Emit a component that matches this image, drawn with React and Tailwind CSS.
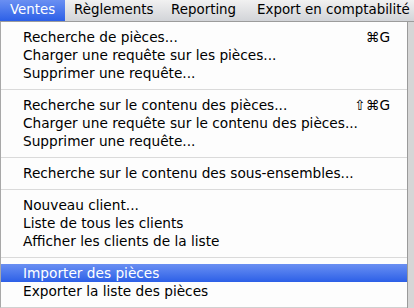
const FONT = { fontFamily: '"DejaVu Sans", "Liberation Sans", sans-serif' }

const groups = [
  [
    { label: 'Recherche de pièces...', keys: '⌘G' },
    { label: 'Charger une requête sur les pièces...' },
    { label: 'Supprimer une requête...' },
  ],
  [
    { label: 'Recherche sur le contenu des pièces...', keys: '⇧⌘G' },
    { label: 'Charger une requête sur le contenu des pièces...' },
    { label: 'Supprimer une requête...' },
  ],
  [{ label: 'Recherche sur le contenu des sous-ensembles...' }],
  [
    { label: 'Nouveau client...' },
    { label: 'Liste de tous les clients' },
    { label: 'Afficher les clients de la liste' },
  ],
  [
    { label: 'Importer des pièces', active: true },
    { label: 'Exporter la liste des pièces' },
  ],
]

function Item({ label, keys, active }) {
  return (
    <div className={`h-[18px] flex items-center pl-[22px] pr-[17px] ${active ? 'bg-gradient-to-b from-[#6a8ff2] to-[#2c5fe7] text-white' : 'text-black'}`}>
      <span className="flex-1 whitespace-nowrap">{label}</span>
      {keys && <span className="whitespace-nowrap">{keys}</span>}
    </div>
  )
}

export default function App() {
  return (
    <div className="w-[414px] h-[308px] overflow-hidden bg-white flex flex-col" style={FONT}>
      <div className="h-[22px] shrink-0 flex items-center text-[13.4px] bg-gradient-to-b from-[#f1f1f1] to-[#d2d4d8] border-b border-[#9c9c9c] whitespace-nowrap">
        <div className="h-full w-[65px] flex items-center pl-[10px] text-white bg-gradient-to-b from-[#6a8ff2] to-[#2c5fe7]">Ventes</div>
        <span className="ml-[9px] w-[97px] text-black">Règlements</span>
        <span className="w-[86px] text-black">Reporting</span>
        <span className="text-black">Export en comptabilité</span>
      </div>
      <div className="flex flex-1 min-h-0">
        <div className="w-[407px] bg-[#fdfdfd] border-l border-[#a8a8a8] border-b border-b-[#d0d0d0] pt-[6px] text-[13.7px]">
          {groups.map((g, i) => (
            <div key={i}>
              {i > 0 && <div className="h-[14px] flex items-center"><div className="h-px w-full bg-[#dadada]" /></div>}
              {g.map((it, j) => <Item key={j} {...it} />)}
            </div>
          ))}
        </div>
        <div className="flex-1 bg-[#d6d6d6] border-l border-[#9a9a9a]" />
      </div>
    </div>
  )
}
